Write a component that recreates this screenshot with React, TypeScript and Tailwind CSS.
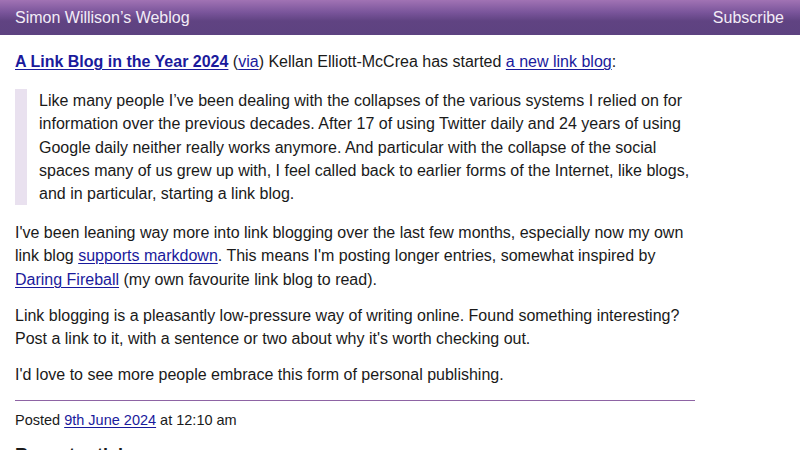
import React from "react";

const link = "text-[#1a1a9c] underline underline-offset-2 decoration-1";

export default function App() {
  return (
    <div className="min-h-[450px] bg-white text-[#1a1a1a] font-['Liberation_Sans',Arial,sans-serif]">
      {/* HEADER */}
      <div className="h-[35px] px-[15px] flex items-center justify-between bg-[linear-gradient(to_bottom,#a173b4_0%,#7a559b_35%,#604382_60%,#5d4280_100%)] text-[#f3ecf7] text-[16px]">
        <div>Simon Willison’s Weblog</div>
        <div className="pr-[1px]">Subscribe</div>
      </div>

      {/* ENTRY */}
      <div className="w-[680px] ml-[15px] pt-[15px] text-[16px] leading-[23.2px]">
        <p>
          <a className={link + " font-bold"} href="#">
            A Link Blog in the Year 2024
          </a>{" "}
          (<a className={link} href="#">via</a>) Kellan Elliott-McCrea has started{" "}
          <a className={link} href="#">a new link blog</a>:
        </p>

        <blockquote className="mt-[16px] border-l-[12px] border-[#e9e1ef] pl-[12px]">
          Like many people I’ve been dealing with the collapses of the various systems I relied on for
          information over the previous decades. After 17 of using Twitter daily and 24 years of using
          Google daily neither really works anymore. And particular with the collapse of the social
          spaces many of us grew up with, I feel called back to earlier forms of the Internet, like blogs,
          and in particular, starting a link blog.
        </blockquote>

        <p className="mt-[16px]">
          I've been leaning way more into link blogging over the last few months, especially now my own
          link blog <a className={link} href="#">supports markdown</a>. This means I'm posting longer
          entries, somewhat inspired by <a className={link} href="#">Daring Fireball</a> (my own
          favourite link blog to read).
        </p>

        <p className="mt-[13px]">
          Link blogging is a pleasantly low-pressure way of writing online. Found something interesting?
          Post a link to it, with a sentence or two about why it's worth checking out.
        </p>

        <p className="mt-[13px]">I'd love to see more people embrace this form of personal publishing.</p>

        <div className="mt-[14px] border-t border-[#8e64a4]" />

        <div className="pt-[9px] text-[14.5px] leading-[20px]">
          Posted <a className={link} href="#">9th June 2024</a> at 12:10 am
        </div>

        <h2 className="mt-[11px] text-[18px] leading-[28px] font-bold">Recent articles</h2>
      </div>
    </div>
  );
}
